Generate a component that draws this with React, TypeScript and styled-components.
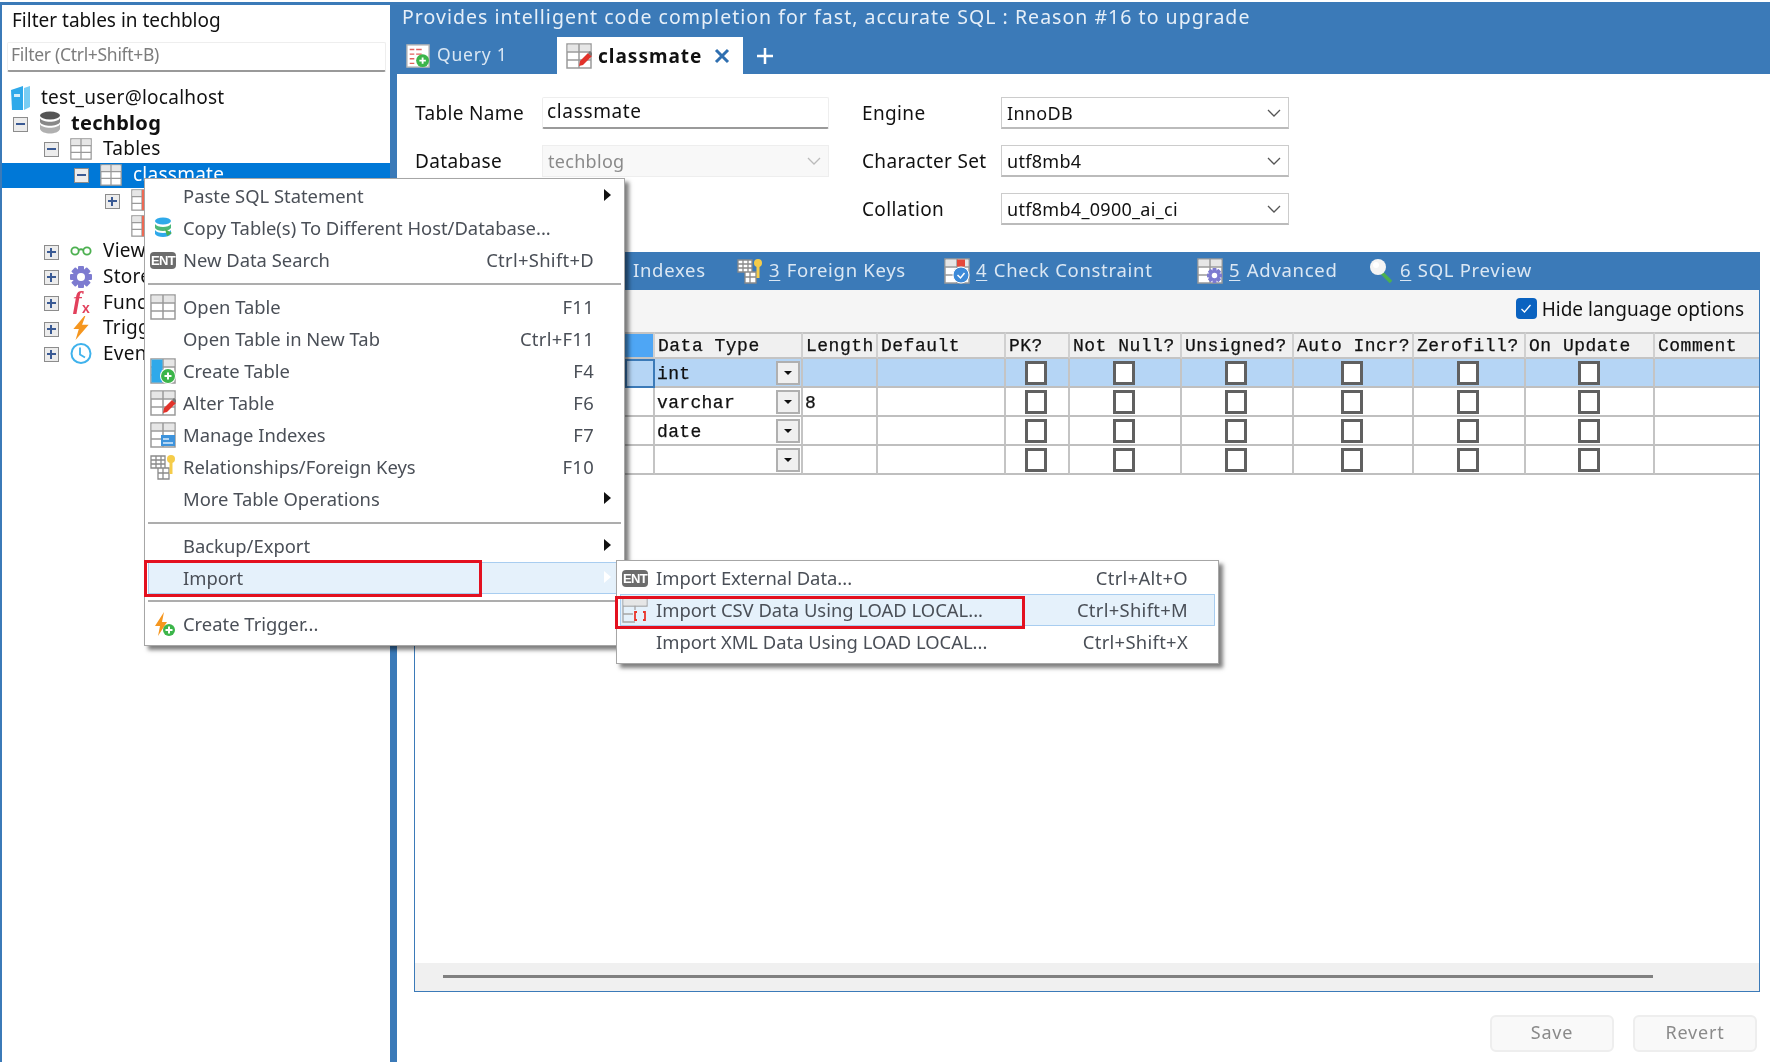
import React from "react";
import styled, { createGlobalStyle } from "styled-components";

const Global = createGlobalStyle`
  html, body { margin: 0; padding: 0; background: #fff; overflow: hidden; }
  * { box-sizing: border-box; }
  body { font-family: "Noto Sans", "Liberation Sans", sans-serif; }
`;

const BLUE = "#3b7ab8";

const Page = styled.div`
  position: relative;
  width: 1770px;
  height: 1062px;
  overflow: hidden;
  display: flex;
  padding-top: 2px;
  background: #fff;
  filter: blur(0.4px);
`;

const Sidebar = styled.aside`
  width: 390px;
  flex: none;
  border-left: 2px solid ${BLUE};
  border-top: 3px solid ${BLUE};
  display: flex;
  flex-direction: column;
  background: #fff;
`;
const FilterTitle = styled.div`
  height: 34px;
  padding: 2px 0 0 10px;
  font-size: 19px;
  line-height: 26px;
  color: #111;
`;
const FilterInput = styled.div`
  margin: 3px 4px 0 5px;
  height: 30px;
  border: 1px solid #eee;
  border-bottom: 2px solid #999;
  border-radius: 2px;
  padding-left: 3px;
  font-size: 17.5px;
  line-height: 23px;
  letter-spacing: -0.3px;
  color: #7d7d7d;
`;
const Tree = styled.div`
  margin-top: 14px;
`;
const TreeRow = styled.div<{ $indent: number; $selected?: boolean }>`
  height: 25.6px;
  display: flex;
  align-items: center;
  padding-left: ${(p) => p.$indent}px;
  background: ${(p) => (p.$selected ? "#0078d7" : "transparent")};
  white-space: nowrap;
`;
const Expander = styled.span<{ $open?: boolean; $hidden?: boolean }>`
  position: relative;
  flex: none;
  width: 15px;
  height: 15px;
  margin-right: 11px;
  border: 1.5px solid ${(p) => (p.$hidden ? "transparent" : "#8c8c8c")};
  background: ${(p) => (p.$hidden ? "transparent" : "#ececec")};
  &::before {
    content: "";
    display: ${(p) => (p.$hidden ? "none" : "block")};
    position: absolute;
    left: 2px;
    right: 2px;
    top: 5px;
    height: 2px;
    background: #3a5a94;
  }
  &::after {
    content: "";
    display: ${(p) => (p.$hidden || p.$open ? "none" : "block")};
    position: absolute;
    top: 2px;
    bottom: 2px;
    left: 5px;
    width: 2px;
    background: #3a5a94;
  }
`;
const TreeIconSlot = styled.span`
  flex: none;
  width: 22px;
  height: 22px;
  margin-right: 10px;
  margin-bottom: 2px;
  display: flex;
  align-items: center;
  justify-content: center;
`;
const TreeLabel = styled.span<{ $bold?: boolean; $selected?: boolean; $flush?: boolean }>`
  font-size: ${(p) => (p.$bold ? 20 : 19)}px;
  font-weight: ${(p) => (p.$bold ? 700 : 400)};
  color: ${(p) => (p.$selected ? "#fff" : "#111")};
  letter-spacing: ${(p) => (p.$bold ? 0.3 : 0.25)}px;
  margin-bottom: 4px;
  margin-left: ${(p) => (p.$bold ? 0 : p.$flush ? -1 : 1)}px;
`;

const Divider = styled.div`
  width: 7px;
  flex: none;
  background: ${BLUE};
`;

const Main = styled.main`
  flex: 1;
  min-width: 0;
  display: flex;
  flex-direction: column;
`;
const Header = styled.header`
  height: 72px;
  flex: none;
  background: ${BLUE};
  display: flex;
  flex-direction: column;
`;
const Promo = styled.div`
  height: 35px;
  padding-left: 5px;
  font-size: 19.5px;
  line-height: 29px;
  color: #e6eff8;
  letter-spacing: 1.03px;
  white-space: nowrap;
`;
const DocTabs = styled.div`
  flex: 1;
  display: flex;
  align-items: stretch;
  padding-left: 9px;
`;
const DocTab = styled.div<{ $active?: boolean }>`
  display: flex;
  align-items: center;
  gap: ${(p) => (p.$active ? 6 : 7)}px;
  width: ${(p) => (p.$active ? 186 : 151)}px;
  padding-left: ${(p) => (p.$active ? 9 : 0)}px;
  background: ${(p) => (p.$active ? "#fff" : "transparent")};
  color: ${(p) => (p.$active ? "#111" : "#d9e6f3")};
  font-size: ${(p) => (p.$active ? 19 : 17.5)}px;
  font-weight: ${(p) => (p.$active ? 700 : 400)};
  letter-spacing: ${(p) => (p.$active ? 1 : 0.8)}px;
`;
const DocTabLabel = styled.span<{ $raised?: boolean }>`
  margin-bottom: ${(p) => (p.$raised ? 3 : 0)}px;
`;
const CloseIcon = styled.svg`
  margin-left: 6px;
`;
const PlusTab = styled.div`
  margin-left: 13px;
  align-self: center;
  display: flex;
`;

const Form = styled.section`
  flex: none;
  display: grid;
  grid-template-columns: 127px 287px 33px 139px 288px;
  grid-auto-rows: 48px;
  padding: 15px 0 0 18px;
  align-items: center;
`;
const FieldLabel = styled.label`
  font-size: 19px;
  color: #111;
  letter-spacing: 0.35px;
`;
const TextField = styled.div`
  height: 32px;
  border: 1px solid #eee;
  border-bottom: 2px solid #9a9a9a;
  border-radius: 2px;
  padding-left: 4px;
  font-size: 19px;
  line-height: 27px;
  color: #111;
  letter-spacing: 0.65px;
`;
const SelectField = styled.div<{ $disabled?: boolean }>`
  height: 32px;
  display: flex;
  align-items: center;
  justify-content: space-between;
  padding: 0 7px 0 5px;
  border: 1px solid ${(p) => (p.$disabled ? "#eee" : "#ccc")};
  border-bottom: ${(p) => (p.$disabled ? "1px solid #eee" : "2px solid #bbb")};
  background: ${(p) => (p.$disabled ? "#f8f8f8" : "#fff")};
  font-size: 18px;
  letter-spacing: 0.3px;
  color: ${(p) => (p.$disabled ? "#8a8a8a" : "#111")};
`;
const Spacer = styled.span``;

const Panel = styled.section`
  flex: 1;
  min-height: 0;
  margin: 19px 10px 0 17px;
  border: 1.5px solid ${BLUE};
  border-top: none;
  display: flex;
  flex-direction: column;
`;
const SubTabs = styled.nav`
  height: 38px;
  flex: none;
  margin: 0 -1px;
  background: ${BLUE};
  display: flex;
  align-items: center;
  padding-left: 219px;
`;
const SubTab = styled.div<{ $w?: number }>`
  width: ${(p) => (p.$w ? `${p.$w}px` : "auto")};
  flex: none;
  display: flex;
  align-items: center;
  gap: 6px;
  color: #dbe7f3;
  font-size: 18.5px;
  letter-spacing: 0.7px;
  line-height: 24px;
  white-space: nowrap;
  u { text-underline-offset: 3px; margin-right: 1px; }
`;
const SubTabText = styled.span`
  margin-bottom: 2px;
`;
const OptionBar = styled.div`
  height: 42px;
  flex: none;
  background: #f5f5f5;
  display: flex;
  justify-content: flex-end;
  align-items: center;
  gap: 5px;
  padding: 0 15px 5px 0;
  font-size: 19px;
  color: #111;
`;
const BlueCheck = styled.span`
  width: 21px;
  height: 21px;
  border-radius: 4px;
  background: #0a62c0;
  display: flex;
  align-items: center;
  justify-content: center;
`;
const Grid = styled.div`
  display: grid;
  flex: none;
  grid-template-columns: 210px 30px 148px 75px 128px 64px 112px 112px 120px 112px 129px 1fr;
  grid-auto-rows: 29px;
  font-family: "Liberation Mono", monospace;
  font-size: 18px;
  -webkit-text-stroke: 0.25px #111;
  color: #111;
`;
const HeadCell = styled.div<{ $blue?: boolean; $last?: boolean }>`
  height: 27px;
  border-top: 2px solid #c4c4c4;
  border-bottom: 2px solid #c4c4c4;
  border-right: ${(p) => (p.$last ? "none" : "2px solid #d0d0d0")};
  background: ${(p) => (p.$blue ? "#4ea6f5" : "#f0f0f0")};
  padding-left: 3px;
  line-height: 25px;
  letter-spacing: 0.5px;
  white-space: nowrap;
  overflow: hidden;
`;
const Cell = styled.div<{ $selected?: boolean; $center?: boolean; $focus?: boolean; $last?: boolean }>`
  margin-top: -2px;
  height: 29px;
  border-bottom: 2px solid #bfbfbf;
  border-right: ${(p) => (p.$last ? "none" : "2px solid #c4c4c4")};
  ${(p) => (p.$focus ? "outline: 2px solid #3b7ab8; outline-offset: -2px;" : "")}
  background: ${(p) => (p.$selected ? "#b5d5f5" : "#fff")};
  display: flex;
  align-items: center;
  justify-content: ${(p) => (p.$center ? "center" : "space-between")};
  padding: ${(p) => (p.$center ? "0 2px 0 0" : "0 1px 0 2px")};
  line-height: 1;
  letter-spacing: 0.35px;
`;
const CellText = styled.span`
  padding-top: 2px;
`;
const Box = styled.span`
  width: 22px;
  height: 24px;
  border: 3px solid #606060;
  background: #fff;
`;
const DropBtn = styled.span`
  width: 24px;
  height: 24px;
  margin-left: auto;
  border: 2px solid #b0b0b0;
  background: #f0f0f0;
  display: flex;
  align-items: center;
  justify-content: center;
  &::after {
    content: "";
    border-left: 4px solid transparent;
    border-right: 4px solid transparent;
    border-top: 4px solid #111;
  }
`;
const GridFill = styled.div`
  flex: 1;
  background: #fff;
`;
const Scroller = styled.div`
  height: 28px;
  flex: none;
  background: #f0f0f0;
  padding: 12px 0 0 28px;
`;
const Thumb = styled.div`
  width: 1210px;
  height: 3px;
  background: #808080;
`;
const Footer = styled.footer`
  height: 70px;
  flex: none;
  display: flex;
  justify-content: flex-end;
  gap: 19px;
  padding: 23px 13px 0 0;
`;
const Btn = styled.button`
  width: 124px;
  height: 37px;
  border: 2px solid #eee;
  border-radius: 6px;
  background: #f9f9f9;
  color: #8a8a8a;
  font-family: inherit;
  font-size: 18px;
  letter-spacing: 0.8px;
  padding: 0 0 3px;
`;

const Menu = styled.div<{ $x: number; $y: number; $w: number; $size: number }>`
  position: absolute;
  left: ${(p) => p.$x}px;
  top: ${(p) => p.$y}px;
  width: ${(p) => p.$w}px;
  padding: 1px 3px 5px;
  background: #fff;
  border: 1.5px solid #a6a6a6;
  box-shadow: 4px 4px 4px rgba(0, 0, 0, 0.5);
  font-size: ${(p) => p.$size}px;
  z-index: 2;
`;
const Item = styled.div<{ $hl?: boolean; $label: number }>`
  position: relative;
  height: 32px;
  display: flex;
  align-items: center;
  padding: 0 27px 2px ${(p) => p.$label}px;
  background: ${(p) => (p.$hl ? "#e5f1fb" : "transparent")};
  outline: ${(p) => (p.$hl ? "1.5px solid #a8cdf0" : "none")};
  outline-offset: -1.5px;
  color: #4a4f57;
  white-space: nowrap;
`;
const ItemIcon = styled.span`
  position: absolute;
  left: 2px;
  top: 3px;
  width: 26px;
  height: 26px;
  display: flex;
  align-items: center;
  justify-content: center;
`;
const ItemLabel = styled.span`
  flex: 1;
`;
const Shortcut = styled.span`
  letter-spacing: 0.3px;
`;
const Arrow = styled.span<{ $light?: boolean }>`
  position: absolute;
  right: 10px;
  top: 9px;
  border-top: 6px solid transparent;
  border-bottom: 6px solid transparent;
  border-left: 7px solid ${(p) => (p.$light ? "#fff" : "#111")};
`;
const Sep = styled.div<{ $h?: number }>`
  height: ${(p) => p.$h ?? 15}px;
  display: flex;
  align-items: center;
  &::after {
    content: "";
    flex: 1;
    height: 2px;
    background: #adadad;
  }
`;
const Ent = styled.span`
  width: 26px;
  height: 17px;
  border-radius: 4px;
  background: #6c6c6c;
  color: #fff;
  font-size: 13px;
  font-weight: 700;
  line-height: 17px;
  text-align: center;
  letter-spacing: -0.6px;
  font-family: "Liberation Sans", sans-serif;
`;
const RedMark = styled.div<{ $x: number; $y: number; $w: number; $h: number }>`
  position: absolute;
  left: ${(p) => p.$x}px;
  top: ${(p) => p.$y}px;
  width: ${(p) => p.$w}px;
  height: ${(p) => p.$h}px;
  border: 3px solid #e3101f;
  z-index: 3;
`;

/* ---------- icons ---------- */
const GridLines = ({ stroke = "#9a9a9a" }: { stroke?: string }) => (
  <>
    <rect x="1" y="1" width="24" height="24" fill="#fff" stroke={stroke} strokeWidth="1.5" />
    <rect x="1.7" y="1.7" width="22.6" height="7" fill="#e6e6e6" />
    <path d="M1 9h24M1 17h24M13 1v24" stroke={stroke} strokeWidth="1.5" fill="none" />
  </>
);
const Ico = ({ size = 26, children }: { size?: number; children: React.ReactNode }) => (
  <svg width={size} height={size} viewBox="0 0 26 26">{children}</svg>
);
const GreenPlus = ({ cx = 19, cy = 19, r = 6.5 }: { cx?: number; cy?: number; r?: number }) => (
  <>
    <circle cx={cx} cy={cy} r={r} fill="#3cb54a" />
    <path d={`M${cx - 3.5} ${cy}h7M${cx} ${cy - 3.5}v7`} stroke="#fff" strokeWidth="2" />
  </>
);
const Pencil = () => (
  <>
    <path d="M13 23l1-5 8-8 4 3-9 9z" fill="#e2332b" />
    <path d="M22 10l2-2 3 3-2 2z" fill="#777" />
  </>
);
const TableIcon = ({ size = 22 }: { size?: number }) => <Ico size={size}><GridLines /></Ico>;
const RedTableIcon = () => (
  <Ico size={22}>
    <GridLines />
    <rect x="13" y="1" width="12" height="24" fill="#ee6a55" />
  </Ico>
);
const ServerIcon = () => (
  <svg width="20" height="26" viewBox="0 0 20 26">
    <path d="M0 5l12-4v24L1 25z" fill="#2fa9ea" />
    <path d="M13 3l6-2v21l-6 3z" fill="#79cdf4" />
    <rect x="3" y="9" width="6" height="3" fill="#d5effb" />
  </svg>
);
const DbIcon = () => (
  <svg width="22" height="24" viewBox="0 0 22 24">
    <ellipse cx="11" cy="4.5" rx="10" ry="4" fill="#555" />
    <path d="M1 7c2 5 18 5 20 0v4c-2 5-18 5-20 0z" fill="#888" />
    <path d="M1 13c2 5 18 5 20 0v5c-2 6-18 6-20 0z" fill="#b0b0b0" />
  </svg>
);
const Glasses = () => (
  <svg width="24" height="12" viewBox="0 0 24 12">
    <circle cx="5.5" cy="6" r="4" fill="none" stroke="#4cb050" strokeWidth="2" />
    <circle cx="18.5" cy="6" r="4" fill="none" stroke="#4cb050" strokeWidth="2" />
    <path d="M9.5 5c2-1.500 3-1.500 5 0" fill="none" stroke="#4cb050" strokeWidth="2" />
  </svg>
);
const Gear = ({ size = 22, x = 0, y = 0 }: { size?: number; x?: number; y?: number }) => (
  <svg x={x} y={y} width={size} height={size} viewBox="0 0 22 22">
    <g fill="#7d7bd0">
      {[0, 45, 90, 135].map((a) => (
        <rect key={a} x="8" y="0" width="6" height="22" rx="1" transform={`rotate(${a} 11 11)`} />
      ))}
      <circle cx="11" cy="11" r="8" />
    </g>
    <circle cx="11" cy="11" r="4" fill="#fff" />
  </svg>
);
const Fx = () => (
  <svg width="24" height="28" viewBox="0 0 24 28" overflow="visible">
    <text x="4" y="20" fontFamily="Liberation Serif, serif" fontStyle="italic" fontWeight="700" fontSize="26" fill="#e2405c">f</text>
    <text x="13" y="24" fontFamily="Liberation Sans, sans-serif" fontWeight="700" fontSize="14" fill="#e2405c">x</text>
  </svg>
);
const Bolt = ({ w = 18, h = 24 }: { w?: number; h?: number }) => (
  <svg width={w} height={h} viewBox="0 0 16 22">
    <path d="M11 0L1 12h5L3 22l12-14H9l3-8z" fill="#f5961f" />
  </svg>
);
const Clock = () => (
  <svg width="23" height="23" viewBox="0 0 22 22">
    <circle cx="11" cy="11" r="9.500" fill="#fff" stroke="#3fb2ec" strokeWidth="2" />
    <path d="M10 5v7l5 3" fill="none" stroke="#3fb2ec" strokeWidth="1.800" />
  </svg>
);
const CopyDb = () => (
  <Ico size={26}>
    <ellipse cx="13" cy="6" rx="8" ry="3.500" fill="#2fa9ea" />
    <path d="M5 9c2 4 14 4 16 0v4c-2 4-14 4-16 0z" fill="#4cb878" />
    <path d="M5 15c2 4 14 4 16 0v4c-2 4-14 4-16 0z" fill="#2fa9ea" />
    <path d="M15 14l7 4-5 3z" fill="#4cb050" />
  </Ico>
);
const CreateIcon = () => (
  <Ico size={26}>
    <GridLines />
    <rect x="1.500" y="1.500" width="11" height="23" fill="#2fa9ea" />
    <circle cx="18" cy="18" r="8" fill="#fff" />
    <GreenPlus cx={18} cy={18} r={7} />
  </Ico>
);
const AlterIcon = ({ size = 26 }: { size?: number }) => (
  <Ico size={size}>
    <GridLines />
    <Pencil />
  </Ico>
);
const IndexIcon = () => (
  <Ico size={26}>
    <GridLines />
    <rect x="11" y="13" width="14" height="11" fill="#3d93dc" />
    <path d="M13 17h6M13 21h10" stroke="#d9ecfb" strokeWidth="1.500" />
  </Ico>
);
const KeyIcon = ({ size = 26 }: { size?: number }) => (
  <Ico size={size}>
    <path d="M1 2h14v12H1zM6 2v12M11 2v12M1 6h14M1 10h14M8 14h11v11H8zM8 19h11M13 14v11" fill="#fff" stroke="#8a8a8a" strokeWidth="1.300" />
    <circle cx="21" cy="5" r="4" fill="#f5cc4a" />
    <path d="M19.500 8h3v12h-3z" fill="#f5cc4a" />
  </Ico>
);
const TriggerIcon = () => (
  <Ico size={26}>
    <path d="M14 1L5 15h5l-2 10 9-14h-5z" fill="#f5961f" />
    <GreenPlus cx={19} cy={19} r={6} />
  </Ico>
);
const CsvIcon = () => (
  <Ico size={26}>
    <path d="M1 1h24v8H1zM1 1v24h12M1 9v8h10M13 1v12" fill="none" stroke="#a5a5a5" strokeWidth="1.300" />
    <rect x="1.500" y="1.500" width="23" height="7" fill="#e6e6e6" />
    <path d="M15 15h-2v8h2M21 15h2v8h-2" fill="none" stroke="#e8362c" strokeWidth="1.800" />
  </Ico>
);
const QueryIcon = () => (
  <Ico size={24}>
    <rect x="1" y="1" width="24" height="24" fill="#fff" stroke="#b5b5b5" strokeWidth="1.500" />
    <path d="M4 6h5M11 6h6M4 11h5M11 11h6M4 16h5M4 21h5" stroke="#e2605c" strokeWidth="1.500" />
    <GreenPlus cx={18} cy={18} r={7} />
  </Ico>
);
const CheckConstraint = () => (
  <Ico size={26}>
    <GridLines />
    <rect x="13" y="1.500" width="8" height="7" fill="#e5483a" />
    <circle cx="17" cy="17" r="8" fill="#3d8ad8" stroke="#fff" />
    <path d="M13.500 17l3 3 4-5" fill="none" stroke="#fff" strokeWidth="1.500" />
  </Ico>
);
const AdvancedIcon = () => (
  <Ico size={26}>
    <GridLines />
    <Gear size={15} x={10} y={10} />
  </Ico>
);
const SqlIcon = () => (
  <Ico size={26}>
    <path d="M14 15l9 9" stroke="#4cb050" strokeWidth="3.500" />
    <circle cx="10" cy="9" r="8" fill="#f4f4f4" />
    <circle cx="8" cy="7" r="3" fill="#fff" />
  </Ico>
);
const Chevron = ({ color = "#555" }: { color?: string }) => (
  <svg width="14" height="8" viewBox="0 0 14 8">
    <path d="M1 1l6 6 6-6" fill="none" stroke={color} strokeWidth="1.300" />
  </svg>
);

/* ---------- data ---------- */
type MainItem = { label?: string; short?: string; icon?: React.ReactNode; arrow?: boolean; hl?: boolean; sep?: number };
const mainMenu: MainItem[] = [
  { label: "Paste SQL Statement", arrow: true },
  { label: "Copy Table(s) To Different Host/Database...", icon: <CopyDb /> },
  { label: "New Data Search", short: "Ctrl+Shift+D", icon: <Ent>ENT</Ent> },
  { sep: 15 },
  { label: "Open Table", short: "F11", icon: <TableIcon size={26} /> },
  { label: "Open Table in New Tab", short: "Ctrl+F11" },
  { label: "Create Table", short: "F4", icon: <CreateIcon /> },
  { label: "Alter Table", short: "F6", icon: <AlterIcon /> },
  { label: "Manage Indexes", short: "F7", icon: <IndexIcon /> },
  { label: "Relationships/Foreign Keys", short: "F10", icon: <KeyIcon /> },
  { label: "More Table Operations", arrow: true },
  { sep: 15 },
  { label: "Backup/Export", arrow: true },
  { label: "Import", arrow: true, hl: true },
  { sep: 14 },
  { label: "Create Trigger...", icon: <TriggerIcon /> },
];
const subMenu: MainItem[] = [
  { label: "Import External Data...", short: "Ctrl+Alt+O", icon: <Ent>ENT</Ent> },
  { label: "Import CSV Data Using LOAD LOCAL...", short: "Ctrl+Shift+M", icon: <CsvIcon />, hl: true },
  { label: "Import XML Data Using LOAD LOCAL...", short: "Ctrl+Shift+X" },
];
const headers = ["Data Type", "Length", "Default", "PK?", "Not Null?", "Unsigned?", "Auto Incr?", "Zerofill?", "On Update", "Comment"];
const rows = [
  { type: "int", len: "" },
  { type: "varchar", len: "8" },
  { type: "date", len: "" },
  { type: "", len: "" },
];
const folders: { label: string; icon: React.ReactNode }[] = [
  { label: "Views", icon: <Glasses /> },
  { label: "Stored Procs", icon: <Gear /> },
  { label: "Functions", icon: <Fx /> },
  { label: "Triggers", icon: <Bolt /> },
  { label: "Events", icon: <Clock /> },
];

const renderItems = (items: MainItem[], labelX: number) =>
  items.map((it, i) =>
    it.sep ? (
      <Sep key={i} $h={it.sep} />
    ) : (
      <Item key={i} $hl={it.hl} $label={labelX}>
        {it.icon && <ItemIcon>{it.icon}</ItemIcon>}
        <ItemLabel>{it.label}</ItemLabel>
        {it.short && <Shortcut>{it.short}</Shortcut>}
        {it.arrow && <Arrow $light={it.hl} />}
      </Item>
    )
  );

export default function App() {
  return (
    <Page>
      <Global />
      <Sidebar>
        <FilterTitle>Filter tables in techblog</FilterTitle>
        <FilterInput>Filter (Ctrl+Shift+B)</FilterInput>
        <Tree>
          <TreeRow $indent={8}>
            <TreeIconSlot><ServerIcon /></TreeIconSlot>
            <TreeLabel $flush>test_user@localhost</TreeLabel>
          </TreeRow>
          <TreeRow $indent={11}>
            <Expander $open />
            <TreeIconSlot><DbIcon /></TreeIconSlot>
            <TreeLabel $bold>techblog</TreeLabel>
          </TreeRow>
          <TreeRow $indent={42}>
            <Expander $open />
            <TreeIconSlot><TableIcon /></TreeIconSlot>
            <TreeLabel>Tables</TreeLabel>
          </TreeRow>
          <TreeRow $indent={72} $selected>
            <Expander $open />
            <TreeIconSlot><TableIcon /></TreeIconSlot>
            <TreeLabel $selected>classmate</TreeLabel>
          </TreeRow>
          <TreeRow $indent={103}>
            <Expander />
            <TreeIconSlot><RedTableIcon /></TreeIconSlot>
            <TreeLabel>Columns</TreeLabel>
          </TreeRow>
          <TreeRow $indent={103}>
            <Expander $hidden />
            <TreeIconSlot><RedTableIcon /></TreeIconSlot>
            <TreeLabel>Indexes</TreeLabel>
          </TreeRow>
          {folders.map((f) => (
            <TreeRow key={f.label} $indent={42}>
              <Expander />
              <TreeIconSlot>{f.icon}</TreeIconSlot>
              <TreeLabel>{f.label}</TreeLabel>
            </TreeRow>
          ))}
        </Tree>
      </Sidebar>
      <Divider />
      <Main>
        <Header>
          <Promo>Provides intelligent code completion for fast, accurate SQL : Reason #16 to upgrade</Promo>
          <DocTabs>
            <DocTab><QueryIcon /><DocTabLabel $raised>Query 1</DocTabLabel></DocTab>
            <DocTab $active>
              <AlterIcon />
              <DocTabLabel>classmate</DocTabLabel>
              <CloseIcon width="16" height="16" viewBox="0 0 16 16">
                <path d="M2 2l12 12M14 2L2 14" stroke="#2f6fb0" strokeWidth="3" />
              </CloseIcon>
            </DocTab>
            <PlusTab>
              <svg width="18" height="18" viewBox="0 0 18 18">
                <path d="M9 1v16M1 9h16" stroke="#fff" strokeWidth="2.500" />
              </svg>
            </PlusTab>
          </DocTabs>
        </Header>
        <Form>
          <FieldLabel>Table Name</FieldLabel>
          <TextField>classmate</TextField>
          <Spacer />
          <FieldLabel>Engine</FieldLabel>
          <SelectField>InnoDB<Chevron /></SelectField>
          <FieldLabel>Database</FieldLabel>
          <SelectField $disabled>techblog<Chevron color="#bbb" /></SelectField>
          <Spacer />
          <FieldLabel>Character Set</FieldLabel>
          <SelectField>utf8mb4<Chevron /></SelectField>
          <Spacer /><Spacer /><Spacer />
          <FieldLabel>Collation</FieldLabel>
          <SelectField>utf8mb4_0900_ai_ci<Chevron /></SelectField>
        </Form>
        <Panel>
          <SubTabs>
            <SubTab $w={104}><SubTabText>Indexes</SubTabText></SubTab>
            <SubTab $w={207}><KeyIcon /><SubTabText><u>3</u> Foreign Keys</SubTabText></SubTab>
            <SubTab $w={253}><CheckConstraint /><SubTabText><u>4</u> Check Constraint</SubTabText></SubTab>
            <SubTab $w={171}><AdvancedIcon /><SubTabText><u>5</u> Advanced</SubTabText></SubTab>
            <SubTab><SqlIcon /><SubTabText><u>6</u> SQL Preview</SubTabText></SubTab>
          </SubTabs>
          <OptionBar>
            <BlueCheck>
              <svg width="12" height="10" viewBox="0 0 12 10">
                <path d="M1.500 5l3 3 6-7" fill="none" stroke="#fff" strokeWidth="1.300" />
              </svg>
            </BlueCheck>
            Hide language options
          </OptionBar>
          <Grid>
            <HeadCell />
            <HeadCell $blue />
            {headers.map((h, i) => <HeadCell key={h} $last={i === headers.length - 1}>{h}</HeadCell>)}
            {rows.map((r, i) => {
              const sel = i === 0;
              return (
                <React.Fragment key={i}>
                  <Cell $selected={sel} />
                  <Cell $selected={sel} $focus={sel} />
                  <Cell $selected={sel}><CellText>{r.type}</CellText><DropBtn /></Cell>
                  <Cell $selected={sel}><CellText>{r.len}</CellText></Cell>
                  <Cell $selected={sel} />
                  {[0, 1, 2, 3, 4, 5].map((c) => (
                    <Cell key={c} $selected={sel} $center><Box /></Cell>
                  ))}
                  <Cell $selected={sel} $last />
                </React.Fragment>
              );
            })}
          </Grid>
          <GridFill />
          <Scroller><Thumb /></Scroller>
        </Panel>
        <Footer>
          <Btn>Save</Btn>
          <Btn>Revert</Btn>
        </Footer>
      </Main>
      <Menu $x={144} $y={178} $w={481} $size={18.4}>{renderItems(mainMenu, 35)}</Menu>
      <Menu $x={616} $y={560} $w={603} $size={18.4}>{renderItems(subMenu, 36)}</Menu>
      <RedMark $x={144} $y={560} $w={338} $h={37} />
      <RedMark $x={615} $y={596} $w={410} $h={33} />
    </Page>
  );
}
